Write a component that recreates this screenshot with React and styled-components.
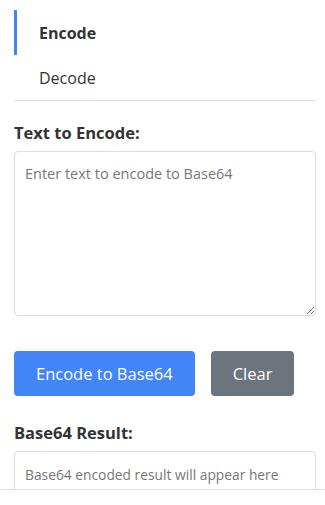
import React, { useState } from 'react';
import styled, { createGlobalStyle } from 'styled-components';

const GlobalStyle = createGlobalStyle`
  html, body {
    margin: 0;
    padding: 0;
    background: #fff;
  }
  body {
    font-family: "Open Sans", "Noto Sans", sans-serif;
    color: #333;
  }
  * { box-sizing: border-box; }
`;

const Page = styled.div`
  display: flex;
  flex-direction: column;
  height: 100vh;
`;

const Main = styled.div`
  flex: 1;
  overflow: hidden;
  padding: 10px 9px 0 14px;
`;

const Footer = styled.div`
  height: 16px;
  border-top: 1px solid #ddd;
`;

const TabList = styled.div`
  display: flex;
  flex-direction: column;
  border-bottom: 1px solid #ddd;
`;

const Tab = styled.button`
  display: flex;
  align-items: center;
  height: 45px;
  padding: 0 0 0 22px;
  border: none;
  border-left: 3px solid ${p => (p.$active ? '#4285f4' : 'transparent')};
  background: none;
  font-family: inherit;
  font-size: 16px;
  font-weight: ${p => (p.$active ? 700 : 400)};
  color: #333;
  text-align: left;
  cursor: pointer;
`;

const Section = styled.div`
  display: flex;
  flex-direction: column;
  margin-top: ${p => p.$top || 0}px;
`;

const Label = styled.label`
  font-size: 16.5px;
  font-weight: 700;
  line-height: 21px;
  margin-bottom: 8px;
`;

const TextInput = styled.textarea`
  height: 165px;
  padding: 12px 10px;
  border: 1px solid #ddd;
  border-radius: 4px;
  font-family: inherit;
  font-size: 14.5px;
  color: #333;
  resize: vertical;
  &::placeholder { color: #777; }
`;

const ResultBox = styled.div`
  min-height: 80px;
  padding: 13px 10px;
  border: 1px solid #ddd;
  border-radius: 4px;
  font-size: 13.8px;
  color: #777;
`;

const Actions = styled.div`
  display: flex;
  gap: 16px;
  margin-top: 35px;
`;

const Button = styled.button`
  height: 45px;
  padding: 0 ${p => p.$pad}px;
  border: none;
  border-radius: 4px;
  background: ${p => p.$bg};
  color: #fff;
  font-family: inherit;
  font-size: 16.5px;
  cursor: pointer;
`;

export default function App() {
  const [mode, setMode] = useState('encode');
  const [text, setText] = useState('');

  return (
    <Page>
      <GlobalStyle />
      <Main>
        <TabList>
          <Tab $active={mode === 'encode'} onClick={() => setMode('encode')}>Encode</Tab>
          <Tab $active={mode === 'decode'} onClick={() => setMode('decode')}>Decode</Tab>
        </TabList>

        <Section $top={21}>
          <Label>Text to Encode:</Label>
          <TextInput
            value={text}
            onChange={e => setText(e.target.value)}
            placeholder="Enter text to encode to Base64"
          />
        </Section>

        <Actions>
          <Button $bg="#4285f4" $pad={22}>Encode to Base64</Button>
          <Button $bg="#6c757d" $pad={22}>Clear</Button>
        </Actions>

        <Section $top={26}>
          <Label>Base64 Result:</Label>
          <ResultBox>Base64 encoded result will appear here</ResultBox>
        </Section>
      </Main>
      <Footer />
    </Page>
  );
}
